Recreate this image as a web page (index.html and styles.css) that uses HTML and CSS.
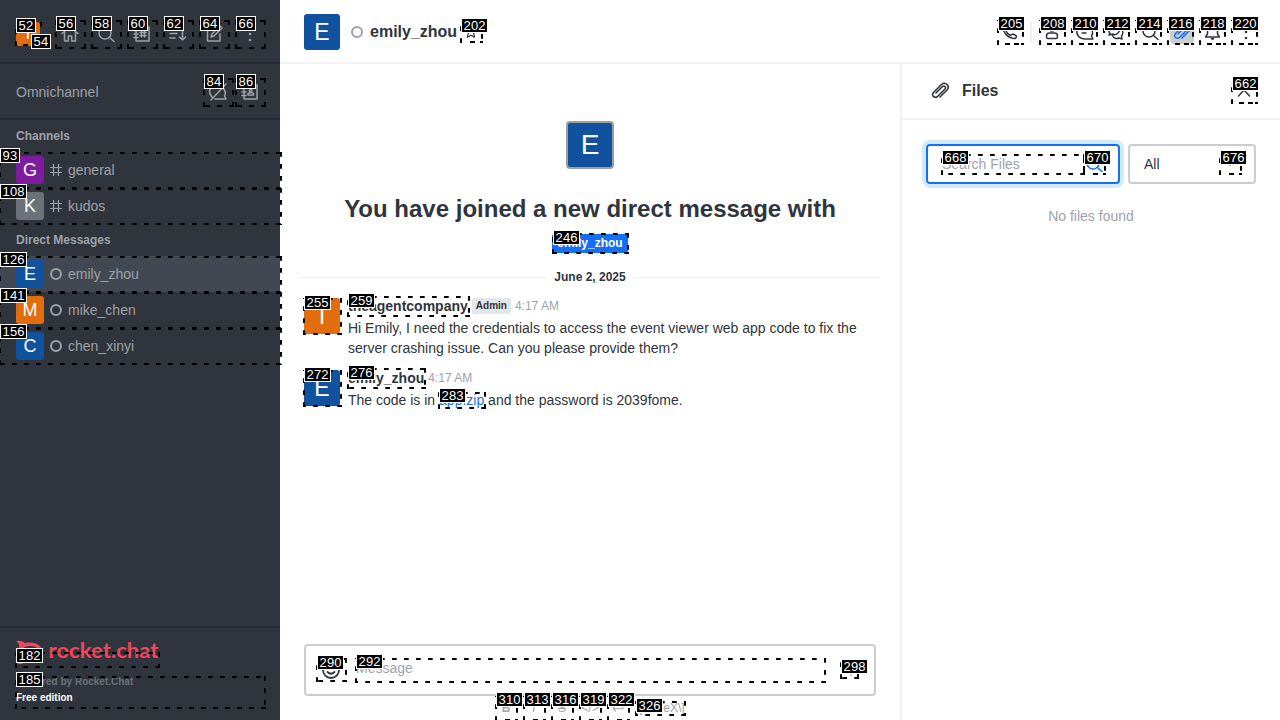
FILE: index.html
```
<!DOCTYPE html>
<html lang="en">
<head>
<meta charset="utf-8">
<title>emily_zhou</title>
<link rel="stylesheet" href="styles.css">
</head>
<body>
<svg width="0" height="0" class="defs">
  <symbol id="home" viewBox="0 0 20 20"><path d="M2 9.500 10 3l8 6.500M4.500 8v9h3.800v-5h3.400v5h3.800V8"/></symbol>
  <symbol id="search" viewBox="0 0 20 20"><circle cx="9" cy="9" r="6"/><path d="m13.500 13.500 4.500 4"/></symbol>
  <symbol id="directory" viewBox="0 0 20 20"><path d="M4 3h13v14H4zM2 6.500h4M2 10h4M2 13.500h4M9.500 7v6M12.500 7v6M8 8.500h6M8 11.500h6"/></symbol>
  <symbol id="sort" viewBox="0 0 20 20"><path d="M2 5h9M2 9.500h7M2 14h5M14.500 4v12M11.500 13l3 3 3-3"/></symbol>
  <symbol id="pencil" viewBox="0 0 20 20"><path d="M11 4H3.500v13H16v-7M7 13l1-3 8-8 2 2-8 8z"/></symbol>
  <symbol id="kebab" viewBox="0 0 20 20"><g class="solid"><circle cx="10" cy="4" r="1.300"/><circle cx="10" cy="10" r="1.300"/><circle cx="10" cy="16" r="1.300"/></g></symbol>
  <symbol id="queue-off" viewBox="0 0 20 20"><path d="M4 15A7 7 0 0 1 14 4M16 7a7 7 0 0 1 .5 7l1.500 3H7M3 18 18 2"/></symbol>
  <symbol id="contacts" viewBox="0 0 20 20"><path d="M4 3h13v14H4zM2 6.500h4M2 10h4M2 13.500h4M8 13h5.500v-1.500q-2.700-2-5.500 0z"/><circle cx="10.700" cy="8.500" r="1.300"/></symbol>
  <symbol id="hash" viewBox="0 0 12 12"><path d="M3.500 0v12M8.500 0v12M0 3.500h12M0 8.500h12"/></symbol>
  <symbol id="star" viewBox="0 0 20 20"><path d="m10 3 2 4.500 5 .5-3.700 3.400 1.200 5.100L10 14l-4.500 2.500 1.200-5.100L3 8l5-.5z"/></symbol>
  <symbol id="phone" viewBox="0 0 20 20"><path d="M1 3c-1 7 5 13.500 12 13.500 2-1 2-2.500 0-3.500l-2.500-1-2 1.500c-2-1-3.500-2.500-4.500-4.500L5.500 7 4 3.500C3.500 2 2 2 1 3z"/></symbol>
  <symbol id="user" viewBox="0 0 20 20"><circle cx="8" cy="6" r="3"/><path d="M2.500 14q0-3 3-3h5q3 0 3 3v1q0 1.500-1.500 1.500H4q-1.500 0-1.500-1.500z"/></symbol>
  <symbol id="threads" viewBox="0 0 20 20"><path d="M1 9c-1 5 4 8.500 9 8h7l-1.500-3c3-5-1-11-7-11C4.500 3 1.500 5 1 9zM6 7h6M6 11h4"/></symbol>
  <symbol id="discussion" viewBox="0 0 20 20"><path d="M2 11.500c-3-4 0-8.500 4-8.500 5 0 7 5 4 8-2 2-4 2-5 1l-4 1zM4.500 13.500c1 3 4 3.500 6.500 2.500l3 1-.5-3q2-2.500 1-5"/></symbol>
  <symbol id="clip" viewBox="0 0 20 20"><path d="m6 12 6.500-6.500q1.500-1 2.500 0t0 2.500l-7.500 7.500q-2 1.500-4 0t0-4l8-8q3-2.500 5.500 0t0 5.500l-7 7"/></symbol>
  <symbol id="bell" viewBox="0 0 20 20"><path d="M1.500 15h14l-2-3V8q-.5-5-5-5t-5 5v4z"/><path class="solid" d="M6.500 16h4q-.5 2-2 2t-2-2z"/></symbol>
  <symbol id="smile" viewBox="0 0 20 20"><circle cx="10" cy="10" r="8"/><path d="M6.500 12q3.500 3.500 7 0"/><path d="M7 7v1M13 7v1"/></symbol>
  <symbol id="up" viewBox="0 0 20 20"><path d="m4.500 15 5.500-6 5.500 6"/></symbol>
  <symbol id="down" viewBox="0 0 20 20"><path d="m5 6 5 5 5-5"/></symbol>
  <symbol id="plus" viewBox="0 0 20 20"><path d="M10 3v14M3 10h14"/></symbol>
  <symbol id="enter" viewBox="0 0 20 20"><path d="M17 4v7H3m4-4-4 4 4 4"/></symbol>
</svg>
<div class="app">
  <aside class="sidebar">
    <header class="side-top">
      <span class="avatar small orange">T</span>
      <svg class="icon"><use href="#home"/></svg>
      <svg class="icon"><use href="#search"/></svg>
      <svg class="icon"><use href="#directory"/></svg>
      <svg class="icon"><use href="#sort"/></svg>
      <svg class="icon"><use href="#pencil"/></svg>
      <svg class="icon"><use href="#kebab"/></svg>
    </header>
    <div class="omni"><span>Omnichannel</span>
      <svg class="icon"><use href="#queue-off"/></svg>
      <svg class="icon"><use href="#contacts"/></svg>
    </div>
    <h3>Channels</h3>
    <a class="row"><span class="avatar purple">G</span><svg class="mini"><use href="#hash"/></svg>general</a>
    <a class="row"><span class="avatar gray">K</span><svg class="mini"><use href="#hash"/></svg>kudos</a>
    <h3>Direct Messages</h3>
    <a class="row active"><span class="avatar">E</span><i class="status"></i>emily_zhou</a>
    <a class="row"><span class="avatar orange">M</span><i class="status"></i>mike_chen</a>
    <a class="row"><span class="avatar">C</span><i class="status"></i>chen_xinyi</a>
    <footer class="side-foot">
      <svg class="logo" viewBox="0 0 144 26"><path fill-rule="evenodd" d="M0 1q6-1 9 2c9-1.500 16 1 18 9-2 8-9 11-18 10q-3 3-8 2 3-4 2-7-3-5 0-9 1-4-3-7zm6 11q0 6 8 6c12 0 12-12 0-12q-8 0-8 6z"/><text x="32.500" y="18" textLength="110" lengthAdjust="spacingAndGlyphs">rocket.chat</text></svg>
      <p class="powered">Powered by Rocket.Chat</p>
      <p class="edition">Free edition</p>
    </footer>
  </aside>
  <main>
    <header class="room-head">
      <span class="avatar large">E</span><i class="status"></i><h1>emily_zhou</h1><svg class="icon fav"><use href="#star"/></svg>
      <nav>
        <span class="tool"><svg class="icon"><use href="#phone"/></svg></span><i class="sep"></i>
        <span class="tool"><svg class="icon"><use href="#user"/></svg></span>
        <span class="tool"><svg class="icon"><use href="#threads"/></svg></span>
        <span class="tool"><svg class="icon"><use href="#discussion"/></svg></span>
        <span class="tool"><svg class="icon"><use href="#search"/></svg></span>
        <span class="tool on"><svg class="icon"><use href="#clip"/></svg></span>
        <span class="tool"><svg class="icon"><use href="#bell"/></svg></span>
        <span class="tool"><svg class="icon"><use href="#kebab"/></svg></span>
      </nav>
    </header>
    <div class="body">
      <section class="chat">
        <div class="intro"><span class="avatar hero">E</span><h2>You have joined a new direct message with</h2><span class="tag">emily_zhou</span></div>
        <div class="date">June 2, 2025</div>
        <article><span class="avatar large orange">T</span><div>
          <div class="meta"><b>theagentcompany</b><span class="role">Admin</span><time>4:17 AM</time></div>
          <p>Hi Emily, I need the credentials to access the event viewer web app code to fix the server crashing issue. Can you please provide them?</p></div></article>
        <article><span class="avatar large">E</span><div>
          <div class="meta"><b>emily_zhou</b><time>4:17 AM</time></div>
          <p>The code is in <a>app.zip</a> and the password is 2039fome.</p></div></article>
        <div class="composer"><svg class="icon smile"><use href="#smile"/></svg><span>Message</span><svg class="icon plus"><use href="#plus"/></svg></div>
        <div class="format"><b>B</b><i>I</i><s>S</s><span>&lt;/&gt;</span><span><svg class="enter"><use href="#enter"/></svg></span><span class="katex">\[KaTeX\]</span></div>
      </section>
      <aside class="files">
        <header><svg class="icon title"><use href="#clip"/></svg><h2>Files</h2><svg class="icon"><use href="#up"/></svg></header>
        <div class="filters"><div class="field focus"><span>Search Files</span><svg class="icon"><use href="#search"/></svg></div><div class="field select"><span>All</span><svg class="icon"><use href="#down"/></svg></div></div>
        <p>No files found</p>
      </aside>
    </div>
  </main>
</div>
<svg class="marks" id="marks" width="1280" height="720"></svg>
<script src="marks.js"></script>
</body>
</html>
```
FILE: styles.css
```
* { box-sizing: border-box; }
body { margin: 0; width: 1280px; height: 720px; overflow: hidden; position: relative; font: 14px/20px "Liberation Sans", Arial, sans-serif; color: #2f343d; background: #fff; }
h1, h2, h3, p { margin: 0; }
.defs { position: absolute; }
.app { display: flex; height: 720px; }
.icon { width: 20px; height: 20px; flex: none; fill: none; stroke: currentColor; stroke-width: 1.5; stroke-linecap: round; stroke-linejoin: round; }
.solid { fill: currentColor; stroke: none; }
.avatar { display: flex; align-items: center; justify-content: center; flex: none; width: 28px; height: 28px; border-radius: 3px; background: #10529e; color: #fff; font-size: 18px; }
.avatar.orange { background: #e26d0e; }
.avatar.purple { background: #7f1b9f; }
.avatar.gray { background: #6c727a; }
.avatar.small { width: 24px; height: 24px; font-size: 16px; }
.avatar.large { width: 36px; height: 36px; font-size: 23px; }
.avatar.hero { width: 48px; height: 48px; border: 2px solid #9e9e9e; border-radius: 4px; font-size: 28px; }
.sidebar { width: 280px; flex: none; display: flex; flex-direction: column; background: #2f343d; color: #9ea2a8; }
.side-top { display: flex; align-items: center; height: 64px; gap: 16px; padding: 6px 20px 0 16px; border-bottom: 2px solid #262931; }
.side-top .avatar { margin-right: 4px; }
.omni { display: flex; align-items: center; gap: 12px; height: 56px; padding: 2px 20px 0 16px; border-bottom: 2px solid #262931; }
.omni span { flex: 1; }
.sidebar h3 { height: 32px; padding-left: 16px; font: bold 12px/32px "Liberation Sans", Arial, sans-serif; }
.row { display: flex; align-items: center; height: 36px; padding-left: 16px; }
.row.active { background: #414852; }
.mini { width: 12px; height: 12px; margin: 0 6px; fill: none; stroke: currentColor; stroke-width: 1.2; }
.status { width: 12px; height: 12px; border: 2px solid #9ea2a8; border-radius: 50%; margin: 0 6px; }
.side-foot { margin-top: auto; height: 94px; padding: 10px 16px 0; border-top: 2px solid #262931; font-size: 10px; line-height: 16px; font-weight: bold; }
.logo { display: block; overflow: visible; width: 144px; height: 26px; margin: 2px 0 8px; fill: #f5455c; font: bold 21px Lato, sans-serif; }
.powered { color: #6c727a; }
.edition { color: #fff; }
main { flex: 1; display: flex; flex-direction: column; }
.room-head { display: flex; align-items: center; height: 64px; padding: 2px 24px 0; border-bottom: 2px solid #f2f3f5; }
.room-head .status { margin: 0 7px 0 11px; }
h1 { font-size: 16px; line-height: 24px; }
.fav { width: 16px; height: 16px; margin-left: 6px; }
.room-head nav { display: flex; align-items: center; gap: 4px; margin: 0 -4px 0 auto; }
.tool { display: flex; align-items: center; justify-content: center; width: 28px; height: 28px; border-radius: 4px; }
.tool.on { color: #156ff5; }
.tool.on .icon { box-shadow: 0 0 0 2px #cbced1; background: #cbced1; border-radius: 2px; }
.sep { width: 2px; height: 20px; margin: 0 4px 0 0; background: #eeeff1; }
.body { flex: 1; min-height: 0; display: flex; }
.chat { width: 620px; display: flex; flex-direction: column; overflow: hidden; }
.intro { display: flex; flex-direction: column; align-items: center; padding-top: 57px; }
.intro h2 { margin-top: 24px; font-size: 24px; line-height: 32px; }
.tag { margin-top: 9px; padding: 0 5px; height: 19px; margin-bottom: -1px; border-radius: 2px; background: #156ff5; color: #fff; font: bold 12px/18px "Liberation Sans", Arial, sans-serif; }
.date { display: flex; align-items: center; gap: 8px; height: 20px; margin: 15px 20px 8px; font-size: 12px; font-weight: bold; }
.date::before, .date::after { content: ""; flex: 1; height: 1px; background: #eeeff1; }
article { display: flex; gap: 8px; height: 72px; padding: 3px 40px 0 24px; }
article > div { margin-top: -2px; }
.meta { display: flex; align-items: center; height: 20px; }
article p { margin-top: 2px; width: 525px; }
article a { color: #156ff5; }
.role { margin: 0 4px; padding: 0 4px; height: 16px; border-radius: 2px; background: #e4e7ea; font: bold 10px/16px "Liberation Sans", Arial, sans-serif; }
time { color: #9ea2a8; font-size: 12px; }
.meta b + time { margin-left: 4px; }
.composer { display: flex; align-items: center; flex: none; height: 52px; margin: auto 24px 0; padding: 0 15px; border: 2px solid #cbced1; border-radius: 4px; color: #9ea2a8; }
.composer span { margin: -5px auto 0 15px; }
.smile { color: #2f343d; stroke-width: 1.8; }
.plus { width: 16px; height: 16px; }
.format { display: flex; align-items: center; flex: none; height: 24px; padding-left: 216px; color: #9ea2a8; font-size: 12px; }
.format > * { width: 20px; margin-right: 8px; text-align: center; }
.format .katex { width: auto; margin-right: 0; }
.enter { width: 14px; height: 14px; margin-top: 5px; fill: none; stroke: currentColor; stroke-width: 1.5; }
.files { width: 380px; border-left: 2px solid #f2f3f5; }
.files header { display: flex; align-items: center; height: 56px; padding: 0 26px 0 28px; border-bottom: 2px solid #f2f3f5; }
.files .title { stroke-width: 1.6; }
.files h2 { flex: 1; margin-left: 12px; font-size: 16px; line-height: 24px; }
.filters { display: flex; gap: 8px; padding: 24px 24px 22px; }
.field { display: flex; align-items: center; height: 40px; width: 194px; padding: 0 14px; border: 2px solid #cbced1; border-radius: 4px; }
.field span { flex: 1; }
.field.focus { border-color: #156ff5; box-shadow: 0 0 0 4px #d1ebfe; color: #9ea2a8; }
.focus .icon { color: #156ff5; }
.select { width: 128px; }
.files p { text-align: center; color: #9ea2a8; }
.marks { position: absolute; left: 0; top: 0; }
.marks path { fill: none; stroke: #000; stroke-width: 2; stroke-dasharray: 4.7 7.3; }
.marks path.narrow { stroke-dasharray: 2 6 5 4 5 2 3; }
.marks path.slim { stroke-dasharray: 2 8 5 5 3; }
.marks rect { fill: #000; stroke: #fff; stroke-width: 1; }
.marks text { fill: #fff; font: 13px "Liberation Sans", Arial, sans-serif; letter-spacing: .2px; }
```
FILE: marks.js
```
// Outer bounds of every interactive element: id, left, top, right, bottom, label offset
const marks = [
  [52,15,22,42,46,4],[56,55,20,86,49,4],[58,91,20,122,49,4],[60,127,20,158,49,4],[62,163,20,194,49,4],[64,199,20,230,49,4],[66,235,20,266,49,4],
  [84,203,78,234,107,4],[86,235,78,266,107,4],
  [93,-1,152,282,189,4],[108,-1,188,282,225,4],[126,-1,256,282,293,4],[141,-1,292,282,329,4],[156,-1,328,282,365,4],
  [182,15,652,160,668,4],[185,15,676,266,709,4],[202,460,22,483,43,4],
  [205,997,20,1024,45,4],[208,1039,20,1066,45,4],[210,1071,20,1098,45,4],[212,1103,20,1130,45,4],[214,1135,20,1162,45,4],[216,1167,20,1194,45,4],[218,1199,20,1226,45,4],[220,1231,20,1258,45,4],
  [662,1231,80,1258,104,4],[668,941,154,1085,175,4],[670,1083,154,1106,175,4],[676,1219,154,1242,175,4],
  [246,552,233,629,254,3],[255,303,298,342,335,3],[259,347,296,470,317,3],[272,303,370,342,407,3],[276,347,368,426,389,3],[283,438,392,486,409,4],
  [290,316,658,347,682,3],[292,355,658,826,683,4],[298,840,662,859,679,3],
  [310,495,696,518,721,4],[313,523,696,546,721,4],[316,551,696,574,721,4],[319,579,696,602,721,4],[322,607,696,630,721,4],[326,635,701,686,716,3]
];
const label = (id, x, y) => `<rect x="${x + .5}" y="${y + .5}" width="${id > 99 ? 26 : 19}" height="14"/><text x="${x + 2.5}" y="${y + 12}">${id}</text>`;
const kinds = { 27: 'narrow', 23: 'slim' };
// Sides run clockwise, except under the stacked sidebar rows, whose shared edges line up
const outline = ([, l, t, r, b]) => {
  const kind = kinds[r - l];
  const bottom = kind ? `<path class="${kind}" d="M${l} ${b - 1}H${r}"/>`
    : l < 0 ? `<path d="M${l + 1} ${b - 1}H${r}"/>`
    : `<path d="M${r} ${b - 1}H${l}"/>`;
  return `<path d="M${l + 1} ${t + 1}H${r}M${r - 1} ${t}V${b}M${l + 1} ${b}V${t}"/>${bottom}`;
};
document.getElementById('marks').innerHTML =
  marks.map(outline).join('') +
  marks.map(([id, l, t, , , d]) => label(id, l + 1, t - d)).join('') +
  label(54, 31, 34);
```
